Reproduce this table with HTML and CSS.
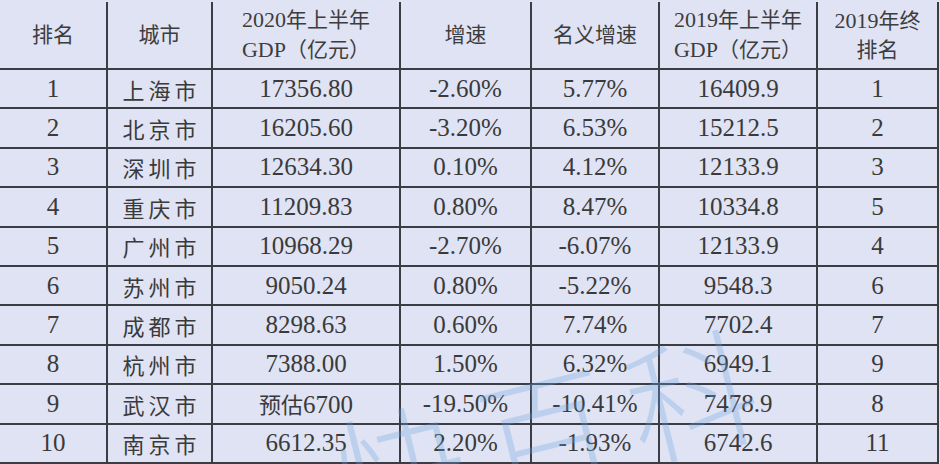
FILE: index.html
```html
<!DOCTYPE html>
<html lang="zh">
<head>
<meta charset="utf-8">
<link rel="stylesheet" href="styles.css">
</head>
<body>
<div class="wrap">
<table class="gdp">
  <colgroup>
    <col class="c1"><col class="c2"><col class="c3"><col class="c4"><col class="c5"><col class="c6"><col class="c7">
  </colgroup>
  <thead>
    <tr>
      <th>排名</th>
      <th>城市</th>
      <th><span class="num">2020</span>年上半年<br><span class="num">GDP</span>（亿元）</th>
      <th>增速</th>
      <th>名义增速</th>
      <th><span class="num">2019</span>年上半年<br><span class="num">GDP</span>（亿元）</th>
      <th><span class="num">2019</span>年终<br>排名</th>
    </tr>
  </thead>
  <tbody>
    <tr><td>1</td><td class="city">上海市</td><td>17356.80</td><td>-2.60%</td><td>5.77%</td><td>16409.9</td><td>1</td></tr>
    <tr><td>2</td><td class="city">北京市</td><td>16205.60</td><td>-3.20%</td><td>6.53%</td><td>15212.5</td><td>2</td></tr>
    <tr><td>3</td><td class="city">深圳市</td><td>12634.30</td><td>0.10%</td><td>4.12%</td><td>12133.9</td><td>3</td></tr>
    <tr><td>4</td><td class="city">重庆市</td><td>11209.83</td><td>0.80%</td><td>8.47%</td><td>10334.8</td><td>5</td></tr>
    <tr><td>5</td><td class="city">广州市</td><td>10968.29</td><td>-2.70%</td><td>-6.07%</td><td>12133.9</td><td>4</td></tr>
    <tr><td>6</td><td class="city">苏州市</td><td>9050.24</td><td>0.80%</td><td>-5.22%</td><td>9548.3</td><td>6</td></tr>
    <tr><td>7</td><td class="city">成都市</td><td>8298.63</td><td>0.60%</td><td>7.74%</td><td>7702.4</td><td>7</td></tr>
    <tr><td>8</td><td class="city">杭州市</td><td>7388.00</td><td>1.50%</td><td>6.32%</td><td>6949.1</td><td>9</td></tr>
    <tr><td>9</td><td class="city">武汉市</td><td><span class="cjk">预估</span>6700</td><td>-19.50%</td><td>-10.41%</td><td>7478.9</td><td>8</td></tr>
    <tr><td>10</td><td class="city">南京市</td><td>6612.35</td><td>2.20%</td><td>-1.93%</td><td>6742.6</td><td>11</td></tr>
  </tbody>
</table>
<div class="watermark">快百科</div>
</div>
</body>
</html>
```
FILE: styles.css
```css
html, body {
  margin: 0;
  padding: 0;
  background: #dfe3f3;
}
.wrap {
  position: relative;
  width: 940px;
  height: 464px;
  overflow: hidden;
  padding-top: 2px;
  box-sizing: border-box;
}
.gdp {
  border-collapse: collapse;
  table-layout: fixed;
  width: 938px;
  color: #3a3a3a;
  font-family: "Liberation Serif", "Noto Sans CJK SC", serif;
}
.c1 { width: 107px; }
.c2 { width: 105px; }
.c3 { width: 188px; }
.c4 { width: 131px; }
.c5 { width: 128px; }
.c6 { width: 158px; }
.c7 { width: 121px; }
.gdp th, .gdp td {
  border: 2px solid #3b3d44;
  text-align: center;
  padding: 0;
}
.gdp tr > :first-child { border-left: none; }
.gdp thead th {
  border-top: none;
  height: 66px;
  font-weight: normal;
  font-size: 21px;
  line-height: 29px;
  font-family: "Liberation Serif", "Noto Sans CJK SC", serif;
  color: #3d3d3d;
}
.gdp thead th .num { font-size: 22px; }
.gdp tbody td {
  height: 37.4px;
  font-size: 25px;
  line-height: 30px;
}
.gdp td.city {
  font-family: "Noto Sans CJK SC", sans-serif;
  font-size: 22px;
  letter-spacing: 4px;
  text-indent: 4px;
}
.gdp .cjk {
  font-family: "Noto Sans CJK SC", sans-serif;
  font-size: 22px;
}
.watermark {
  position: absolute;
  left: 320px;
  top: 415px;
  font-family: "Noto Sans CJK SC", sans-serif;
  font-size: 130px;
  font-weight: 300;
  line-height: 1;
  letter-spacing: 20px;
  color: rgba(110, 165, 230, 0.3);
  transform: rotate(-14deg);
  transform-origin: left top;
  pointer-events: none;
  white-space: nowrap;
}
```
